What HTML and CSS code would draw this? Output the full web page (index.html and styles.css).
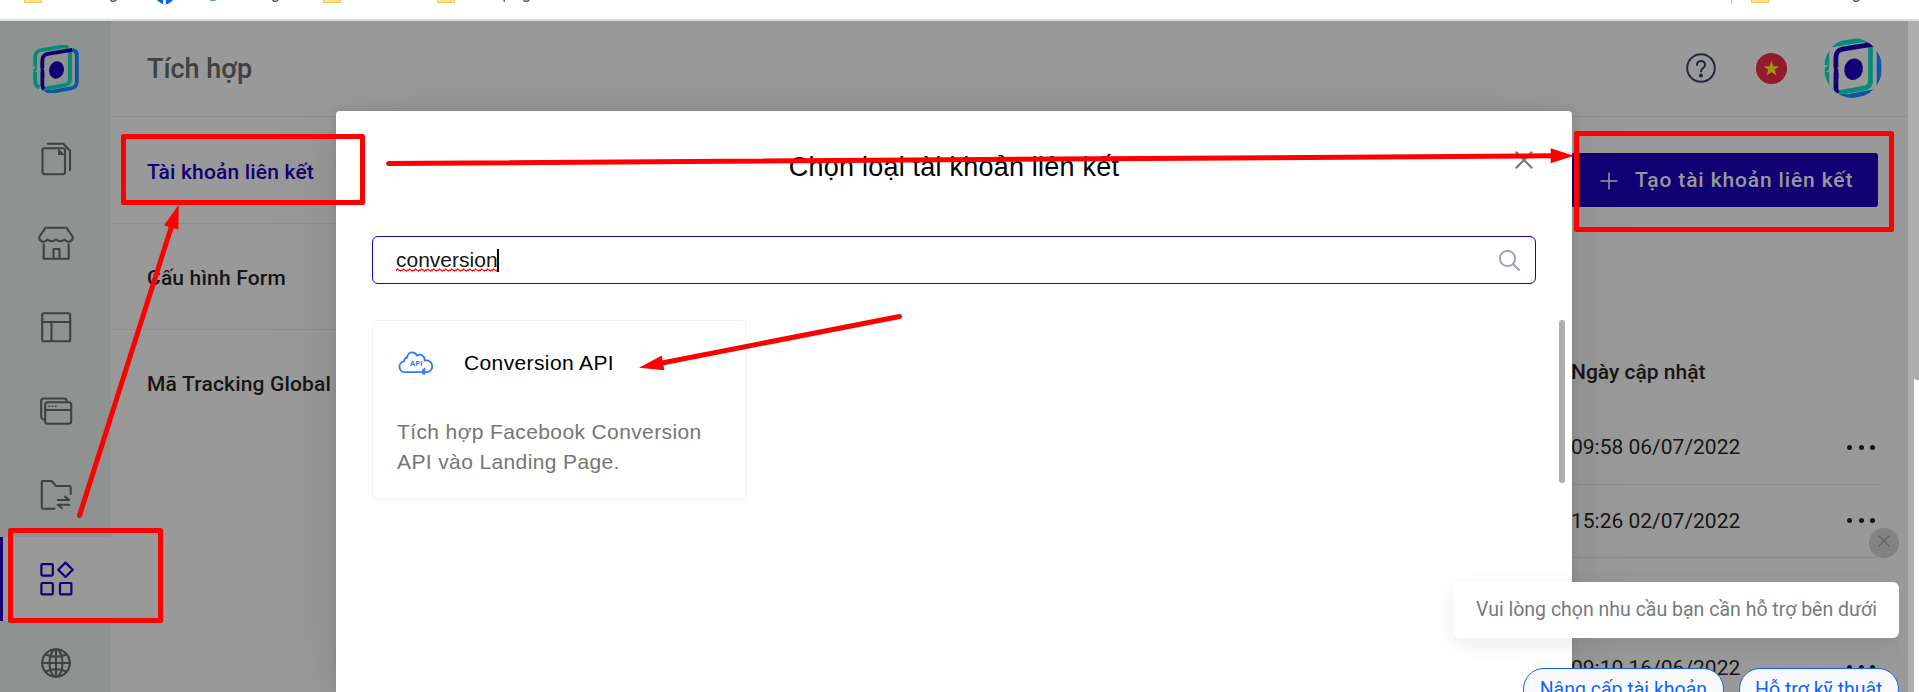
FILE: index.html
```html
<!DOCTYPE html>
<html lang="vi">
<head>
<meta charset="utf-8">
<title>Tích hợp</title>
<link rel="stylesheet" href="styles.css">
</head>
<body>
<svg class="defs" width="0" height="0">
  <symbol id="logo" viewBox="38 28 139 146">
    <g fill="none" stroke-width="11.500">
      <path stroke="#008c78" d="M44 94V66Q44 48 60 44L125 33Q138 31 144 37"/>
      <path stroke="#008c78" d="M44 110V140Q45 152 57 157"/>
      <path stroke="#0b57a4" d="M157 43Q171 46 171 58V138Q171 155 156 159L98 170Q84 172 74 163"/>
      <path stroke="#008c78" d="M150 45V134Q150 146 138 149L74 161"/>
      <path stroke="#100074" d="M66 99V74Q67 58 82 55L157 43"/>
      <path stroke="#100074" d="M66 112V150Q66 158 71 163"/>
    </g>
    <path fill="#100074" d="M61 78L72 106V128L61 112z"/>
    <path fill="#008c78" d="M39 101L49 93V104L39 113z"/>
    <ellipse cx="109" cy="104" rx="22.500" ry="26.500" fill="#100074" transform="rotate(15 109 104)"/>
  </symbol>
  <symbol id="folder" viewBox="0 0 18 4"><path fill="#ffe38f" d="M0 0h18v3H0z"/><path fill="#f0c84a" d="M0 0h1v3H0zM17 0h1v3h-1zM1 2h16v1H1z"/></symbol>
  <symbol id="hook" viewBox="0 0 7 3"><path fill="none" stroke="#4b4f55" stroke-width="1.4" d="M.7 0Q1 1.3 3.3 1.3T6 0"/></symbol>
</svg>

<div class="bookmarks">
  <svg class="bookmark-art" width="1919" height="5">
    <use href="#folder" x="24" width="18" height="4"/><use href="#hook" x="110" width="7" height="3"/>
    <circle cx="165" cy="-5" r="9.3" fill="#0866ff"/><path fill="#fff" d="M163 0h3v4h-3z"/>
    <path fill="#34a853" d="M209 0h8q-4 2-8 0z"/><use href="#hook" x="272" width="7" height="3"/>
    <use href="#folder" x="323" width="18" height="4"/><use href="#folder" x="437" width="18" height="4"/>
    <path fill="#4b6fa8" d="M503.500 0h1.500v2h-1.500z"/><use href="#hook" x="523" width="7" height="3"/>
    <path fill="#c8c8c8" d="M1731 0h1v4h-1z"/><use href="#folder" x="1751" width="18" height="4"/><use href="#hook" x="1853" width="7" height="3"/>
  </svg>
</div>

<div class="app">
  <nav class="sidebar">
    <div class="brand"><svg width="46" height="48"><use href="#logo"/></svg></div>
    <div class="nav-item"><svg viewBox="0 0 36 36"><rect x="4.500" y="7.200" width="22.500" height="26" rx="2"/><path d="M9.700 2.700H25.300L32 9.700V29.300"/><path class="solid" d="M20 7.500v6.500h7z"/></svg></div>
    <div class="nav-item"><svg viewBox="0 0 36 36"><path d="M7.500 2.700H28.500L34.500 11.500Q35.500 15 32 16.500Q28.500 17.500 26.500 14.500Q22.500 18 18 14.500Q13.500 18 9.500 14.500Q7.500 17.500 4 16.500Q.5 15 1.500 11.500z"/><path d="M5.700 19.300V33.700H30.700V19.300M15.500 33V24H21.500V33"/></svg></div>
    <div class="nav-item"><svg viewBox="0 0 36 36"><rect x="4.200" y="4.200" width="28" height="28" rx="1.500"/><path d="M4 13H32M13.500 13V32"/></svg></div>
    <div class="nav-item"><svg viewBox="0 0 36 36"><rect x="7.200" y="9.200" width="26" height="21.500" rx="2.500"/><path d="M7 17H33M5.500 26.500Q3.200 25.500 3.200 23V8Q3.200 5.500 6 5.500H25.500Q28.500 5.500 29 8"/><path class="fine" d="M11 13.200h.5M14.300 13.200h.5M17.500 13.200h.5"/></svg></div>
    <div class="nav-item"><svg viewBox="0 0 36 36"><path d="M16.500 31.700H5Q3.800 31.700 3.800 30.500V5.200Q3.800 4 5 4H13.700L18 9H31.500Q32.700 9 32.700 10.200V17"/><path d="M19.800 23H31.200L27 19.700M31.200 27.700H19.800L24 31.200"/></svg></div>
    <div class="nav-item active"><svg viewBox="0 0 36 36"><rect x="3.400" y="3.200" width="11.400" height="11.400" rx="1"/><rect x="3.400" y="22" width="11.400" height="11.400" rx="1"/><rect x="22" y="22" width="11.400" height="11.400" rx="1"/><path d="M27.500 1.600L34.700 8.800L27.500 16L20.300 8.800z"/></svg></div>
    <div class="nav-item"><svg viewBox="0 0 36 36"><circle cx="18" cy="18" r="13.800"/><ellipse cx="18" cy="18" rx="6.500" ry="13.800"/><path d="M18 4V32M4 18H32M7.500 9.500Q18 14 28.500 9.500M7.500 26.500Q18 22 28.500 26.500"/></svg></div>
  </nav>

  <main class="main">
    <header class="header">
      <h1 class="page-title">Tích hợp</h1>
      <div class="header-tools">
        <svg class="help" viewBox="0 0 30 30"><circle cx="15" cy="15" r="13.800"/><path d="M11 12Q11 8 15 8T19 12Q19 14 17 15.200Q15 16.300 15 18.500"/><circle class="help-dot" cx="15" cy="22.500" r="2"/></svg>
        <svg class="flag" viewBox="0 0 31 31"><circle cx="15.500" cy="15.500" r="15.500" fill="#93192d"/><path fill="#a29413" d="M15.500 7.500l1.900 5.700h6l-4.800 3.600 1.800 5.700-4.900-3.500-4.900 3.500 1.800-5.700-4.800-3.600h6z"/></svg>
        <svg class="avatar"><use href="#logo"/></svg>
      </div>
    </header>
    <div class="content">
      <ul class="menu">
        <li class="menu-item current">Tài khoản liên kết</li>
        <li class="menu-item">Cấu hình Form</li>
        <li class="menu-item last">Mã Tracking Global</li>
      </ul>
      <section class="accounts">
        <button class="create"><svg viewBox="0 0 18 18"><path d="M9 .5V17.500M.5 9H17.500"/></svg>Tạo tài khoản liên kết</button>
        <div class="table">
          <div class="table-head">Ngày cập nhật</div>
          <div class="row"><span>09:58 06/07/2022</span><i class="dots"><b></b><b></b><b></b></i></div>
          <div class="row"><span>15:26 02/07/2022</span><i class="dots"><b></b><b></b><b></b></i></div>
          <div class="row"></div>
          <div class="row"><span>09:10 16/06/2022</span><i class="dots"><b></b><b></b><b></b></i></div>
        </div>
      </section>
    </div>
  </main>
  <div class="page-scroll"><div class="page-thumb"></div></div>
</div>

<div class="modal">
  <div class="modal-head">
    <h2 class="modal-title">Chọn loại tài khoản liên kết</h2>
    <svg class="modal-close" viewBox="0 0 18 18"><path d="M.8 .8L17.200 17.200M17.200 .8L.8 17.200"/></svg>
  </div>
  <div class="search">
    <span class="query">conversion<svg class="squiggle" width="101" height="4"><defs><pattern id="wave" width="6" height="4" patternUnits="userSpaceOnUse"><path d="M0 3L1.500 1L4.500 3L6 1.800" fill="none" stroke="#f00" stroke-width="1.100"/></pattern></defs><rect width="101" height="4" fill="url(#wave)"/></svg></span><span class="caret"></span>
    <svg class="search-icon" viewBox="0 0 21 21"><circle cx="8.500" cy="8.500" r="7.600"/><path d="M14 14L20 20"/></svg>
  </div>
  <div class="results">
    <article class="card">
      <div class="card-head">
        <svg class="api" viewBox="0 0 36 24"><path d="M9 21.200H6.500A5.500 5.500 0 0 1 6 10.300Q6.500 7 9 6.500Q10 1.300 14.300 1.300Q17.500 1.300 19 4.500Q25.500 1.500 27 9.500A5.500 5.500 0 0 1 29.500 21.200H28"/><path d="M9 21.200H26"/><path class="plug" d="M25 18.500v4.500M26.500 17.500v5.500"/><text x="12" y="15">API</text></svg>
        <h3 class="card-title">Conversion API</h3>
      </div>
      <p class="card-text">Tích hợp Facebook Conversion API vào Landing Page.</p>
    </article>
    <div class="modal-thumb"></div>
  </div>
</div>

<aside class="support">
  <div class="support-close"><svg viewBox="0 0 12 12"><path d="M.5 .5L11.500 11.500M11.500 .5L.5 11.500"/></svg></div>
  <div class="support-msg">Vui lòng chọn nhu cầu bạn cần hỗ trợ bên dưới</div>
  <div class="chips"><span class="chip">Nâng cấp tài khoản</span><span class="chip">Hỗ trợ kỹ thuật</span></div>
</aside>

<svg class="annotations" width="1919" height="692">
  <g fill="none" stroke="#f00" stroke-width="5" stroke-linejoin="round" stroke-linecap="round">
    <rect x="10.500" y="530.500" width="150" height="90"/>
    <rect x="123.500" y="136.500" width="239" height="66"/>
    <rect x="1576.500" y="133.500" width="315" height="96"/>
    <path d="M79.500 515.500L172 225M388.500 163.500L1552 155.800M899.500 316.500L662 363"/>
  </g>
  <path fill="#f00" d="M178.800 204.500L164 225.500L178.300 229.500zM1574 155.700L1550.700 148.300V163.300zM639 367.700L661.700 355.600L664.300 370.200z"/>
</svg>
</body>
</html>
```

FILE: styles.css
```css
* { box-sizing: border-box; }
body { margin: 0; width: 1919px; height: 692px; overflow: hidden; position: relative; background: #fff; font-family: Roboto, sans-serif; font-size: 21px; color: #161616; }
h1, h2, h3, p, ul { margin: 0; padding: 0; font-weight: 400; list-style: none; }
.defs { position: absolute; }

.bookmarks { height: 21px; border-bottom: 2px solid #dcdcdc; }
.bookmark-art { display: block; }

.app { display: flex; height: 671px; overflow: hidden; }
.sidebar { width: 111px; background: #8e9290; flex: none; }
.brand { height: 96px; display: flex; align-items: center; justify-content: center; }
.nav-item { height: 84px; display: flex; align-items: center; justify-content: center; border-left: 3px solid transparent; padding-right: 3px; }
.nav-item svg { width: 36px; height: 36px; fill: none; stroke: #404241; stroke-width: 2.1; stroke-linecap: round; stroke-linejoin: round; }
.nav-item .solid { fill: #404241; stroke: none; }
.nav-item .fine { stroke-width: 1.6; }
.nav-item.active { background: #999; border-left-color: #100074; }
.nav-item.active svg { stroke: #100074; stroke-width: 2.2; }

.main { flex: 1; background: #999; min-width: 0; }
.header { height: 96px; border-bottom: 1px solid #8e8e8e; display: flex; align-items: center; justify-content: space-between; padding: 0 26px 0 36px; }
.page-title { font-size: 27px; font-weight: 500; color: #404040; line-height: 32px; }
.header-tools { display: flex; align-items: center; padding-bottom: 1px; }
.help { width: 30px; height: 30px; fill: none; stroke: #232b40; stroke-width: 2; stroke-linecap: round; margin-right: 40px; }
.help .help-dot { fill: #232b40; stroke: none; }
.flag { width: 31px; height: 31px; margin-right: 37px; }
.avatar { width: 58px; height: 60px; border-radius: 50%; }

.content { display: flex; justify-content: space-between; }
.menu { width: 225px; }
.menu-item { height: 106px; padding: 2px 0 0 36px; line-height: 104px; font-weight: 500; letter-spacing: .17px; white-space: nowrap; border-bottom: 1px solid #8e8e8e; }
.menu-item.last { border-bottom: 0; }
.menu-item.current { height: 107px; color: #100074; padding-top: 3px; }
.accounts { width: 337px; padding: 36px 30px 0 0; }
.create { width: 307px; height: 54px; border: 0; border-radius: 3px; background: #100074; color: #999; font: 500 21px Roboto, sans-serif; letter-spacing: .86px; display: flex; align-items: center; padding: 0 0 0 29px; white-space: nowrap; }
.create svg { width: 18px; height: 18px; margin: 1px 17px 0 0; fill: none; stroke: #999; stroke-width: 1.5; }
.table { padding-top: 150px; }
.table-head { height: 54px; line-height: 31px; font-weight: 500; }
.row { height: 73.5px; display: flex; align-items: center; justify-content: space-between; border-bottom: 1px solid #8c8c8c; padding-right: 3px; }
.dots { display: flex; gap: 6.300px; }
.dots b { width: 5px; height: 5px; border-radius: 50%; background: #161616; }
.page-scroll { width: 11px; border-left: 6px solid #adadad; }
.page-thumb { height: 359px; background: #adadad; border-bottom-left-radius: 3px; }

.modal { position: absolute; left: 336px; top: 111px; width: 1236px; height: 581px; background: #fff; border-radius: 4px 4px 0 0; padding: 0 36px; box-shadow: 0 0 10px rgba(0,0,0,.1), 0 10px 70px rgba(0,0,0,.1); font-family: "Liberation Sans", Arial, sans-serif; color: #000; }
.modal-head { height: 125px; display: flex; justify-content: center; padding-top: 39px; position: relative; }
.modal-title { font-size: 27px; line-height: 34px; letter-spacing: .22px; }
.modal-close { position: absolute; right: 3px; top: 40px; width: 18px; height: 18px; stroke: #757575; stroke-width: 2; }
.search { height: 48px; border: 1px solid #1f00b4; border-radius: 6px; display: flex; align-items: center; padding: 0 15px 0 23px; }
.query { position: relative; line-height: 24px; color: #161616; }
.squiggle { position: absolute; left: 0; top: 20px; }
.caret { width: 2px; height: 23px; background: #000; margin-left: -1px; }
.search-icon { width: 21px; height: 21px; margin-left: auto; fill: none; stroke: #9aa1af; stroke-width: 1.9; stroke-linecap: round; }
.results { display: flex; justify-content: space-between; padding-top: 36px; margin-right: -29px; }
.card { width: 375px; height: 180px; border: 1px solid #f2f2f2; border-radius: 4px; padding: 27px 24px 0; letter-spacing: .38px; }
.card-head { display: flex; align-items: center; height: 30px; }
.api { width: 36px; height: 24px; margin: 0 30px 1px 1px; fill: none; stroke: #2f7cf6; stroke-width: 1.8; stroke-linecap: round; }
.api .plug { stroke-width: 1.6; }
.api text { font: 700 7.5px "Open Sans", sans-serif; letter-spacing: 0; fill: #2f7cf6; stroke: none; }
.card-title { font-size: 21px; line-height: 30px; }
.card-text { margin-top: 39px; line-height: 30px; color: #757575; }
.modal-thumb { width: 6px; height: 163px; border-radius: 3px; background: #adadad; }

.support { position: absolute; right: 20px; top: 528px; height: 164px; overflow: hidden; padding-left: 24px; display: flex; flex-direction: column; align-items: flex-end; font-size: 19.5px; }
.support-close { flex: none; width: 30px; height: 30px; border-radius: 50%; background: #828282; display: flex; justify-content: center; padding-top: 7px; }
.support-close svg { width: 12px; height: 12px; stroke: #626262; stroke-width: 1.3; }
.support-msg { flex: none; margin-top: 24px; width: 446px; height: 56px; line-height: 56px; padding-left: 23px; border-radius: 6px; background: #fff; color: #757a80; white-space: nowrap; box-shadow: 0 6px 20px rgba(0,0,0,.08); }
.chips { flex: none; display: flex; gap: 15px; margin-top: 30px; }
.chip { height: 42px; line-height: 41px; padding: 0 15.5px; border: 1px solid #1264f5; border-radius: 21px; background: #f8fafe; color: #1264f5; white-space: nowrap; }
.annotations { position: absolute; left: 0; top: 0; }
```
